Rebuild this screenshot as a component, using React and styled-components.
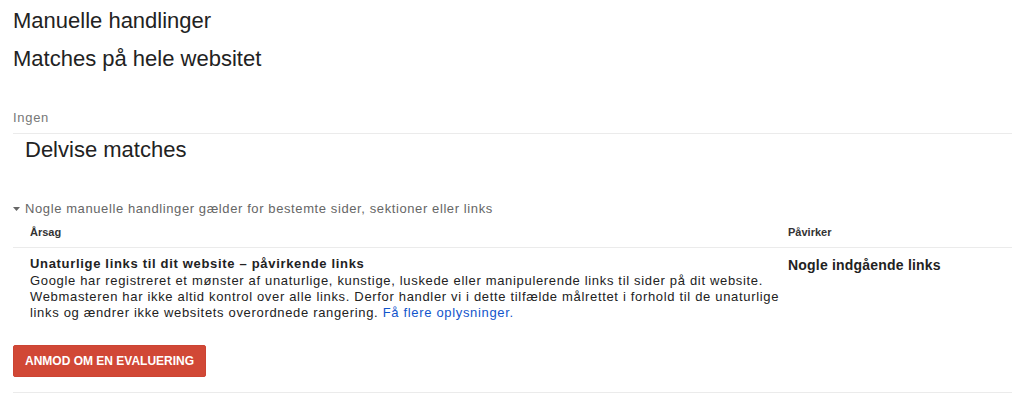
import React from 'react'
import styled, { createGlobalStyle } from 'styled-components'

const GlobalStyle = createGlobalStyle`
  html, body {
    margin: 0;
    padding: 0;
    background: #fff;
    font-family: "Liberation Sans", Arial, sans-serif;
    color: #222;
  }
`

const Page = styled.div`
  padding: 8px 12px 0 13px;
`

const Title = styled.h1`
  margin: 0;
  margin-top: ${(p) => p.$top || 0}px;
  padding-left: ${(p) => p.$indent || 0}px;
  font-size: 22px;
  line-height: 26px;
  font-weight: normal;
  color: #222;
`

const Status = styled.div`
  margin-top: 38px;
  padding-bottom: 7px;
  font-size: 13px;
  line-height: 16px;
  letter-spacing: 0.7px;
  color: #777;
  border-bottom: 1px solid #ebebeb;
`

const Toggle = styled.div`
  margin-top: 38px;
  display: flex;
  align-items: center;
  gap: 5px;
  font-size: 13px;
  line-height: 16px;
  letter-spacing: 0.6px;
  color: #666;
  svg {
    display: block;
    margin-top: -1px;
  }
`

const Table = styled.div`
  margin-top: 8px;
  display: grid;
  grid-template-columns: 1fr 224px;
`

const HeadCell = styled.div`
  padding: 0 1px 8px ${(p) => (p.$first ? 17 : 0)}px;
  font-size: 11px;
  line-height: 14px;
  font-weight: bold;
  color: #333;
  border-bottom: 1px solid #ebebeb;
`

const Cell = styled.div`
  padding: 8px 1px 0 ${(p) => (p.$first ? 17 : 0)}px;
  font-size: 13px;
  line-height: 16px;
  letter-spacing: 0.67px;
  color: #222;
`

const Reason = styled.div`
  font-weight: bold;
  letter-spacing: 0.68px;
  margin-bottom: 1px;
`

const Affects = styled.div`
  margin-top: 1px;
  font-size: 14px;
  font-weight: bold;
  letter-spacing: 0.2px;
`

const Link = styled.a`
  color: #1155cc;
  text-decoration: none;
`

const Actions = styled.div`
  padding: 24px 0 15px;
  border-bottom: 1px solid #ebebeb;
`

const Button = styled.button`
  display: block;
  height: 32px;
  padding: 0 11px;
  border: 1px solid #cc4433;
  border-radius: 2px;
  background: #d14836;
  color: #fff;
  font-family: "Liberation Sans", Arial, sans-serif;
  font-size: 12px;
  font-weight: bold;
  text-transform: uppercase;
  cursor: pointer;
`

const Caret = () => (
  <svg width="7" height="4" viewBox="0 0 7 4">
    <path d="M0 0 L7 0 L3.5 4 Z" fill="#666" />
  </svg>
)

export default function App() {
  return (
    <Page>
      <GlobalStyle />
      <Title>Manuelle handlinger</Title>
      <Title $top={12}>Matches på hele websitet</Title>
      <Status>Ingen</Status>
      <Title $top={3} $indent={12}>Delvise matches</Title>
      <Toggle>
        <Caret />
        Nogle manuelle handlinger gælder for bestemte sider, sektioner eller links
      </Toggle>
      <Table>
        <HeadCell $first>Årsag</HeadCell>
        <HeadCell>Påvirker</HeadCell>
        <Cell $first>
          <Reason>Unaturlige links til dit website – påvirkende links</Reason>
          Google har registreret et mønster af unaturlige, kunstige, luskede eller manipulerende links til sider på dit website.
          Webmasteren har ikke altid kontrol over alle links. Derfor handler vi i dette tilfælde målrettet i forhold til de unaturlige
          links og ændrer ikke websitets overordnede rangering. <Link href="#">Få flere oplysninger.</Link>
        </Cell>
        <Cell>
          <Affects>Nogle indgående links</Affects>
        </Cell>
      </Table>
      <Actions>
        <Button>Anmod om en evaluering</Button>
      </Actions>
    </Page>
  )
}
